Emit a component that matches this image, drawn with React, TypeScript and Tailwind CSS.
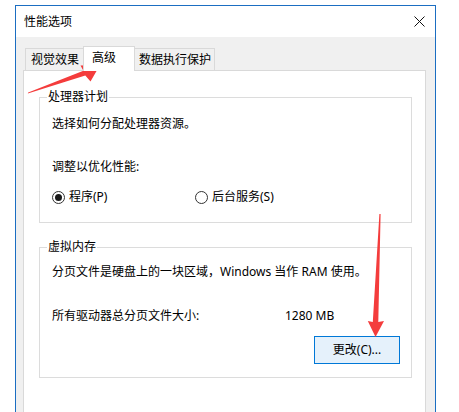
import React from "react";

const Radio = ({ checked, label }: { checked?: boolean; label: string }) => (
  <span className="flex items-center gap-[4px]">
    <span className="w-[13px] h-[13px] rounded-full border border-[#333333] bg-white flex items-center justify-center">
      {checked && <span className="w-[7px] h-[7px] rounded-full bg-[#1a1a1a]" />}
    </span>
    <span>{label}</span>
  </span>
);

const App = () => {
  return (
    <div className="relative w-[459px] h-[412px] overflow-hidden bg-white pl-[15px] pt-[5px] text-[12px] leading-[16px] text-black font-['Noto_Sans','Noto_Sans_CJK_SC',sans-serif]">
      {/* Dialog window */}
      <div className="w-[421px] h-[430px] border border-[#1b6ec2] flex flex-col">
        {/* Title bar */}
        <div className="h-[31px] bg-white flex items-center justify-between pl-[8px] pr-[10px]">
          <span>性能选项</span>
          <svg width="11" height="11" viewBox="0 0 11 11">
            <path d="M0.5 0.5 L10.5 10.5 M10.5 0.5 L0.5 10.5" stroke="#111" strokeWidth="1" />
          </svg>
        </div>

        {/* Body */}
        <div className="flex-1 bg-[#f0f0f0] pl-[7px] pr-[9px] pt-[9px] flex flex-col">
          {/* Tabs */}
          <div className="flex items-end h-[24px] pl-[2px]">
            <div className="h-[22px] w-[58px] border-l border-t border-[#d9d9d9] pl-[5px] flex items-center">
              视觉效果
            </div>
            <div className="relative z-10 -mb-px h-[25px] w-[52px] bg-white border-l border-t border-r border-[#d9d9d9] pl-[8px] pt-[3px]">
              高级
            </div>
            <div className="h-[22px] w-[80px] border-t border-r border-[#d9d9d9] pl-[4px] flex items-center">
              数据执行保护
            </div>
          </div>

          {/* Tab panel */}
          <div className="flex-1 bg-white border border-[#d9d9d9] pl-[15px] pr-[13px] pt-[18px]">
            <fieldset className="border border-[#dcdcdc]">
              <legend className="ml-[7px] px-[1px]">处理器计划</legend>
              <div className="pl-[12px] pt-[11px] pb-[17px]">
                <p>选择如何分配处理器资源。</p>
                <p className="mt-[27px]">调整以优化性能:</p>
                <div className="mt-[14px] flex">
                  <div className="w-[143px]">
                    <Radio checked label="程序(P)" />
                  </div>
                  <Radio label="后台服务(S)" />
                </div>
              </div>
            </fieldset>

            <fieldset className="mt-[16px] border border-[#dcdcdc]">
              <legend className="ml-[7px] px-[1px]">虚拟内存</legend>
              <div className="pl-[12px] pr-[11px] pt-[9px] pb-[13px]">
                <p>分页文件是硬盘上的一块区域，Windows 当作 RAM 使用。</p>
                <div className="mt-[28px] flex">
                  <span className="w-[233px]">所有驱动器总分页文件大小:</span>
                  <span>1280 MB</span>
                </div>
                <div className="mt-[12px] flex justify-end">
                  <button className="w-[86px] h-[28px] border border-[#0078d7] bg-[#e5f1fb] flex items-center justify-center">
                    更改(C)...
                  </button>
                </div>
              </div>
            </fieldset>
          </div>
        </div>
      </div>

      {/* Red annotation arrows */}
      <svg className="absolute inset-0 pointer-events-none" width="459" height="412" viewBox="0 0 459 412">
        <polygon
          points="27.8,93.5 28.2,92.5 83.4,70.8 80.5,65.6 100,65 90.5,81.5 85.3,75.6"
          fill="#f43c3c"
        />
        <polygon
          points="379.4,214 380.6,214 378.3,322 384,321 375.5,337 367.8,321 372.8,322"
          fill="#f43c3c"
        />
      </svg>
    </div>
  );
};

export default App;
